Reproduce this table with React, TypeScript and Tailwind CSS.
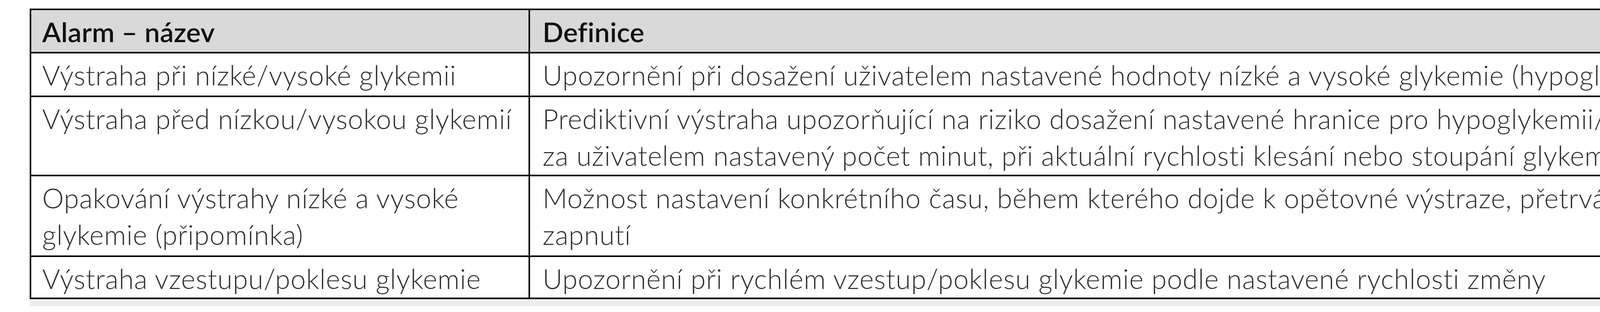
import React from "react";

type AlarmRow = {
	id: string;
	name: string[];
	definition: string[];
	height: string;
};

// řádky tabulky alarmů
const rows: AlarmRow[] = [
	{
		id: "low-high",
		name: ["Výstraha při nízké/vysoké glykemii"],
		definition: [
			"Upozornění při dosažení uživatelem nastavené hodnoty nízké a vysoké glykemie (hypoglykemie/hyperglykemie)",
		],
		height: "h-[112px]",
	},
	{
		id: "predictive",
		name: ["Výstraha před nízkou/vysokou glykemií"],
		definition: [
			"Prediktivní výstraha upozorňující na riziko dosažení nastavené hranice pro hypoglykemii/hyperglykemii",
			"za uživatelem nastavený počet minut, při aktuální rychlosti klesání nebo stoupání glykemie",
		],
		height: "h-[203px]",
	},
	{
		id: "repeat",
		name: ["Opakování výstrahy nízké a vysoké", "glykemie (připomínka)"],
		definition: [
			"Možnost nastavení konkrétního času, během kterého dojde k opětovné výstraze, přetrvávají-li podmínky pro její",
			"zapnutí",
		],
		height: "h-[207px]",
	},
	{
		id: "rate",
		name: ["Výstraha vzestupu/poklesu glykemie"],
		definition: [
			"Upozornění při rychlém vzestup/poklesu glykemie podle nastavené rychlosti změny",
		],
		height: "h-[108px]",
	},
];

function Lines({ lines }: { lines: string[] }) {
	return (
		<>
			{lines.map((line) => (
				<div key={line} className="whitespace-nowrap">
					{line}
				</div>
			))}
		</>
	);
}

export default function App() {
	return (
		<div className="h-[800px] w-[4981px] overflow-hidden bg-white pl-[76px] pt-[22px] font-['Lato','Noto_Sans',sans-serif]">
			<div className="w-[4841px] overflow-hidden border-4 border-black">
				{/* Header */}
				<div className="flex h-[107px] bg-[#d9d9d9] text-[70px] font-semibold leading-[94px] tracking-[0.3px] text-[#111111]">
					<div className="w-[1277px] shrink-0 border-r-4 border-black pl-[28px] pt-[8px]">
						Alarm – název
					</div>
					<div className="min-w-0 flex-1 pl-[32px] pt-[8px]">Definice</div>
				</div>

				{/* Rows */}
				{rows.map((row) => (
					<div
						key={row.id}
						className={`flex border-t-4 border-black text-[70px] font-light leading-[94px] tracking-[0.9px] text-[#2e2e2e] ${row.height}`}
					>
						<div className="w-[1277px] shrink-0 border-r-4 border-black pl-[28px] pt-[8px]">
							<Lines lines={row.name} />
						</div>
						<div className="min-w-0 flex-1 pl-[32px] pt-[8px]">
							<Lines lines={row.definition} />
						</div>
					</div>
				))}
			</div>
			<div className="h-[18px] w-[4841px] bg-[#ededed]" />
		</div>
	);
}
